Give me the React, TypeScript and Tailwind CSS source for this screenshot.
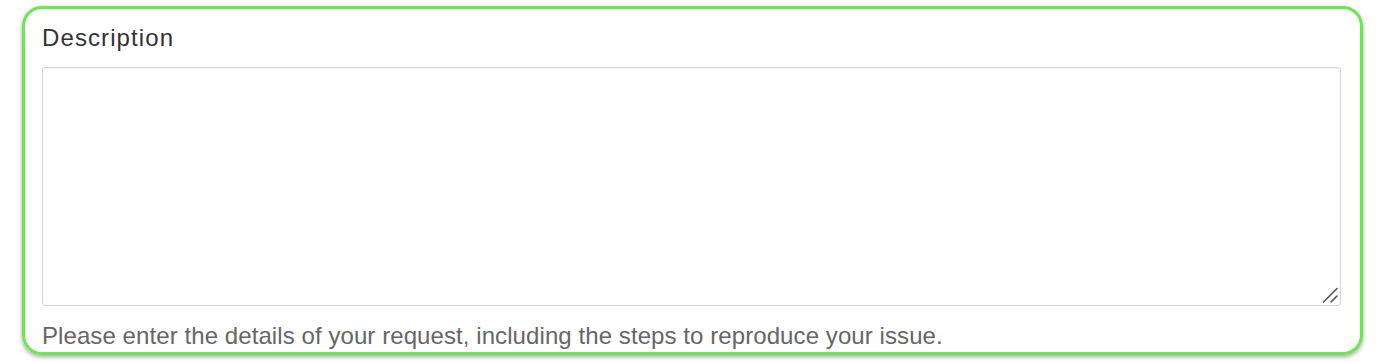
import React from "react";

export default function App() {
  return (
    <div className="w-[1381px] h-[362px] bg-white pt-[6px] pl-[22px]" style={{ fontFamily: '"Liberation Sans", Arial, sans-serif' }}>
      <div className="w-[1341px] h-[349px] border-[3px] border-[#6ae84e] rounded-[20px] shadow-[0_2px_4px_rgba(0,0,0,0.35)] pt-[15px] pl-[17px] pr-[19px] flex flex-col">
        <label htmlFor="desc" className="block text-[24px] leading-[28px] h-[28px] text-[#333333] tracking-[1.1px]">
          Description
        </label>
        <div className="relative mt-[15px] h-[239px]">
          <textarea
            id="desc"
            className="block w-full h-[239px] border border-[#d6d6d6] rounded-[3px] bg-white resize-none outline-none shadow-[inset_0_1px_1px_rgba(0,0,0,0.04)]"
          />
          <svg className="absolute right-[2px] bottom-[2px] pointer-events-none" width="18" height="18" viewBox="0 0 18 18">
            <line x1="2.5" y1="16" x2="16" y2="2.5" stroke="#555555" strokeWidth="1.6" strokeLinecap="round" />
            <line x1="10" y1="16" x2="16" y2="10" stroke="#555555" strokeWidth="1.6" strokeLinecap="round" />
          </svg>
        </div>
        <p className="mt-[16px] text-[24px] leading-[28px] text-[#666666] whitespace-nowrap tracking-[0.08px]">
          Please enter the details of your request, including the steps to reproduce your issue.
        </p>
      </div>
    </div>
  );
}
